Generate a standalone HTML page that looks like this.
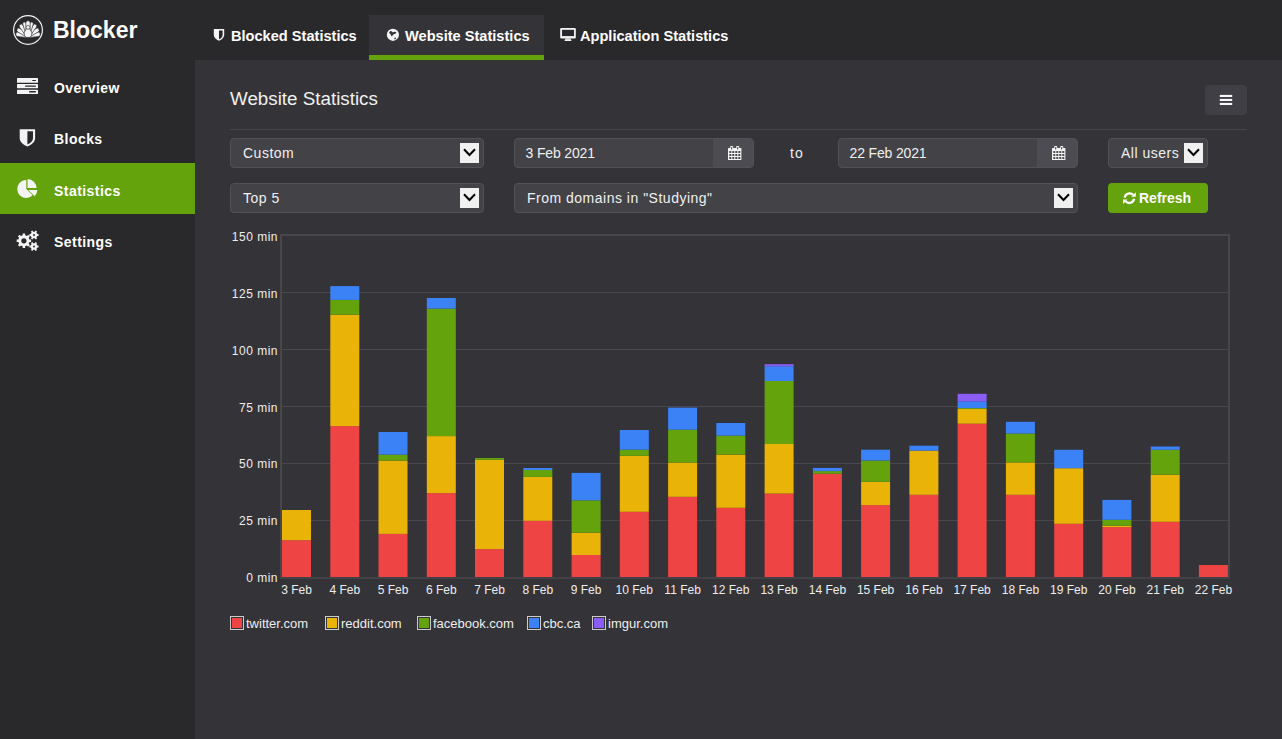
<!DOCTYPE html>
<html><head><meta charset="utf-8"><title>Blocker</title>
<style>
*{box-sizing:border-box;margin:0;padding:0}
html,body{width:1282px;height:739px;overflow:hidden;background:#343338;font-family:"Liberation Sans",sans-serif;color:#f2f2f2}
.abs{position:absolute}
#top{position:absolute;left:0;top:0;width:1282px;height:60px;background:#29282b}
#side{position:absolute;left:0;top:0;width:195px;height:739px;background:#29282b}
#content{position:absolute;left:195px;top:60px;width:1087px;height:679px;background:#343338}
.logo-text{position:absolute;left:53px;top:15px;font-size:23px;font-weight:bold;line-height:30px;color:#fff}
.nav{position:absolute;left:0;width:195px;height:51px}
.nav.active{background:#65a30d}
.nav .t{position:absolute;left:54px;top:2.5px;line-height:51px;font-size:14px;font-weight:bold;color:#fff;letter-spacing:0.45px}
.nav svg{position:absolute}
.tab{position:absolute;top:15px;height:45px}
.tab.active{background:#343338}
.tab.active:after{content:"";position:absolute;left:0;right:0;bottom:0;height:5px;background:#65a30d}
.tab .t{position:absolute;top:1px;line-height:40px;font-size:14.6px;font-weight:bold;color:#fff;white-space:nowrap}
.tab svg{position:absolute}
.title{position:absolute;left:230px;top:87px;font-size:18.8px;line-height:24px;color:#f0f0f0}
.hr{position:absolute;left:230px;top:129px;width:1017px;height:1px;background:#45444a}
.menu-btn{position:absolute;left:1205px;top:85px;width:42px;height:30px;background:#403f45;border-radius:4px}
.ctl{position:absolute;height:30px;background:#434247;border:1px solid #525157;border-radius:4px;font-size:14px;line-height:28px;color:#f0f0f0;white-space:nowrap}
.ctl .t{position:absolute;left:12px;top:0;letter-spacing:0.5px}
.ctl .t.d{left:10.5px;letter-spacing:-0.15px}
.dd{position:absolute;width:19px;height:20px;background:#f0f0f0;top:4px}
.dd svg{position:absolute;left:3px;top:5px}
.addon{position:absolute;top:0;right:0;width:40px;height:28px;background:#4d4c53;border-radius:0 3px 3px 0}
.addon svg{position:absolute;left:15px;top:7px}
.refresh{position:absolute;left:1108px;top:183px;width:100px;height:30px;background:#65a30d;border-radius:4px;color:#fff;font-weight:bold;font-size:14px;line-height:30px}
.ylab{position:absolute;right:1004px;font-size:12px;line-height:14px;color:#eee;text-align:right;white-space:nowrap;letter-spacing:0.5px}
.xlab{position:absolute;top:582px;width:60px;margin-left:-30px;text-align:center;font-size:12px;line-height:16px;color:#eee;white-space:nowrap}
.leg{position:absolute;top:616px;height:14px;font-size:13px;line-height:14px;color:#eee;white-space:nowrap}
.leg .sw{position:absolute;left:0;top:0;width:14px;height:14px;border:1px solid #ccc;padding:1px}
.leg .sw div{width:10px;height:10px}
.leg .t{position:absolute;left:16px;top:1px}
</style></head><body>
<div id="top"></div>
<div id="side"></div>
<div id="content"></div>

<!-- logo -->
<svg class="abs" style="left:12px;top:14px" width="32" height="32" viewBox="0 0 32 32">
<circle cx="16" cy="16" r="14.4" fill="none" stroke="#f4f4f4" stroke-width="1.2"/>
<g fill="#f4f4f4" stroke="#29282b" stroke-width="0.6">
<rect x="13.80" y="9.10" width="4.4" height="12.40" rx="2.20" transform="rotate(-83 16 21.5)"/>
<rect x="13.80" y="9.10" width="4.4" height="12.40" rx="2.20" transform="rotate(83 16 21.5)"/>
<rect x="13.95" y="8.90" width="4.1" height="12.60" rx="2.05" transform="rotate(-60 16 21.5)"/>
<rect x="13.95" y="8.90" width="4.1" height="12.60" rx="2.05" transform="rotate(60 16 21.5)"/>
<rect x="14.10" y="7.90" width="3.8" height="13.60" rx="1.90" transform="rotate(-36 16 21.5)"/>
<rect x="14.10" y="7.90" width="3.8" height="13.60" rx="1.90" transform="rotate(36 16 21.5)"/>
<rect x="14.30" y="7.50" width="3.4" height="14.00" rx="1.70" transform="rotate(-17 16 21.5)"/>
<rect x="14.30" y="7.50" width="3.4" height="14.00" rx="1.70" transform="rotate(17 16 21.5)"/>
<rect x="13.80" y="6.70" width="4.4" height="14.80" rx="2.20" transform="rotate(0 16 21.5)"/>
<path d="M16 14.6C18 14.6 18.6 16 18.6 16.8C19.6 17.6 19.8 18.8 19.8 19.8C19.8 22.2 18.2 23.6 16 23.6C13.8 23.6 12.2 22.2 12.2 19.8C12.2 18.8 12.4 17.6 13.4 16.8C13.4 16 14 14.6 16 14.6Z"/>
<circle cx="16" cy="13.3" r="1.9"/>
</g>
</svg>
<div class="logo-text">Blocker</div>

<!-- nav -->
<div class="nav" style="top:60px"><div class="t">Overview</div></div>
<div class="nav" style="top:111px"><div class="t">Blocks</div></div>
<div class="nav active" style="top:163px"><div class="t">Statistics</div></div>
<div class="nav" style="top:214.5px"><div class="t">Settings</div></div>

<svg class="abs" style="left:0;top:60px" width="195" height="200" viewBox="0 60 195 200">
 <g fill="#f4f4f4"><rect x="17" y="78" width="21" height="4.8" rx=".5"/><rect x="17" y="83.9" width="21" height="4.3" rx=".5"/><rect x="17" y="89.7" width="21" height="4.3" rx=".5"/></g>
 <g fill="#29282b"><rect x="32.2" y="79.9" width="3.8" height="1.2" rx=".5"/><rect x="25" y="85.4" width="11" height="1.4" rx=".6"/><rect x="29" y="91" width="7" height="1.4" rx=".6"/></g>
 <path d="M19.7 129.2h15.4v8.8c0 3.8-3.3 6.8-7.7 8.6-4.4-1.8-7.7-4.8-7.7-8.6z" fill="#f4f4f4"/>
 <path d="M27.4 131.2h5.6v6.8c0 2.8-2.1 5-5.6 6.5z" fill="#28272b"/>
 <g fill="#f4f4f4">
  <path d="M26.3 189V180A9 9 0 1 0 32.66 195.36Z"/>
  <path d="M27.5 188.1V179.1A9 9 0 0 1 36.5 188.1Z"/>
  <path d="M28.3 189.9H37.3A9 9 0 0 1 34.66 196.26Z"/>
 </g>
 <g fill="#f4f4f4" fill-rule="evenodd">
  <path d="M22.68 235.23L22.64 233.61L25.16 233.61L25.12 235.23L26.97 236.00L28.10 234.83L29.87 236.60L28.70 237.73L29.47 239.58L31.09 239.54L31.09 242.06L29.47 242.02L28.70 243.87L29.87 245.00L28.10 246.77L26.97 245.60L25.12 246.37L25.16 247.99L22.64 247.99L22.68 246.37L20.83 245.60L19.70 246.77L17.93 245.00L19.10 243.87L18.33 242.02L16.71 242.06L16.71 239.54L18.33 239.58L19.10 237.73L17.93 236.60L19.70 234.83L20.83 236.00ZM26.50 240.80A2.6 2.6 0 1 0 21.30 240.80A2.6 2.6 0 1 0 26.50 240.80Z"/>
  <path d="M34.88 231.72L35.45 230.53L37.14 231.51L36.40 232.60L37.28 234.12L38.60 234.02L38.60 235.98L37.28 235.88L36.40 237.40L37.14 238.49L35.45 239.47L34.88 238.28L33.12 238.28L32.55 239.47L30.86 238.49L31.60 237.40L30.72 235.88L29.40 235.98L29.40 234.02L30.72 234.12L31.60 232.60L30.86 231.51L32.55 230.53L33.12 231.72ZM35.00 235.00A1.0 1.0 0 1 0 33.00 235.00A1.0 1.0 0 1 0 35.00 235.00Z"/>
  <path d="M34.88 243.22L35.45 242.03L37.14 243.01L36.40 244.10L37.28 245.62L38.60 245.52L38.60 247.48L37.28 247.38L36.40 248.90L37.14 249.99L35.45 250.97L34.88 249.78L33.12 249.78L32.55 250.97L30.86 249.99L31.60 248.90L30.72 247.38L29.40 247.48L29.40 245.52L30.72 245.62L31.60 244.10L30.86 243.01L32.55 242.03L33.12 243.22ZM35.00 246.50A1.0 1.0 0 1 0 33.00 246.50A1.0 1.0 0 1 0 35.00 246.50Z"/>
 </g>
</svg>

<!-- tabs -->
<div class="tab" style="left:196px;width:173px"><div class="t" style="left:35px">Blocked Statistics</div></div>
<div class="tab active" style="left:369px;width:175px"><div class="t" style="left:36px">Website Statistics</div></div>
<div class="tab" style="left:544px;width:200px"><div class="t" style="left:36px">Application Statistics</div></div>
<svg class="abs" style="left:195px;top:15px" width="400" height="40" viewBox="195 15 400 40">
 <path d="M213.8 29h10.4v5.9c0 2.5-2.2 4.5-5.2 5.9-3-1.4-5.2-3.4-5.2-5.9z" fill="#f4f4f4"/>
 <path d="M219 30.6h3.6v4.3c0 1.8-1.4 3.2-3.6 4.3z" fill="#28272b"/>
 <circle cx="392.9" cy="34.8" r="6.1" fill="#f4f4f4"/>
 <path d="M389.1 32.2L390.6 31.1L392.2 31.4L392.9 32.6L394.3 31.8L396.3 31.9L395.7 33.5L393.9 34.2L392.7 35.1L392.1 36.6L391.1 35.7L390.5 34.1L389.6 33.4Z" fill="#343338"/>
 <circle cx="393.1" cy="31.2" r="0.9" fill="#f4f4f4"/>
 <path d="M394.4 38.1L395.4 37.5L396.1 38.1L395.4 39.2L394.5 39.4Z" fill="#343338"/>
 <rect x="560.2" y="28" width="15.6" height="10.6" rx="1.3" fill="#f4f4f4"/>
 <rect x="562" y="29.8" width="12" height="6.3" fill="#28272b"/>
 <path d="M565.4 38.5h5.2l.3 1.3h-5.8z" fill="#f4f4f4"/>
 <rect x="564.6" y="39.6" width="6.8" height="1.3" rx=".4" fill="#f4f4f4"/>
</svg>
<div class="title">Website Statistics</div>
<div class="menu-btn">
 <svg style="position:absolute;left:14px;top:9px" width="14" height="12" viewBox="0 0 14 12">
  <g fill="#f8f8f8"><rect x="0.8" y="0.9" width="12.4" height="2.1"/><rect x="0.8" y="4.9" width="12.4" height="2.1"/><rect x="0.8" y="8.9" width="12.4" height="2.1"/></g>
 </svg>
</div>
<div class="hr"></div>

<div class="ctl" style="left:230px;top:138px;width:254px">
 <div class="t">Custom</div>
 <div class="dd" style="left:229px"><svg width="13" height="9" viewBox="0 0 13 9"><path d="M1 1.2l5.5 5.8 5.5-5.8" fill="none" stroke="#000" stroke-width="2"/></svg></div>
</div>
<div class="ctl" style="left:230px;top:183px;width:254px">
 <div class="t">Top 5</div>
 <div class="dd" style="left:229px"><svg width="13" height="9" viewBox="0 0 13 9"><path d="M1 1.2l5.5 5.8 5.5-5.8" fill="none" stroke="#000" stroke-width="2"/></svg></div>
</div>

<div class="ctl" style="left:514px;top:138px;width:240px">
 <div class="t d">3 Feb 2021</div>
 <div class="addon"><svg width="14" height="14" viewBox="0 0 14 14">
  <rect x="0" y="1.9" width="13.4" height="12.1" rx=".5" fill="#f4f4f4"/>
  <rect x="2.2" y="0" width="3" height="3" rx=".8" fill="#f4f4f4"/><rect x="8.2" y="0" width="3" height="3" rx=".8" fill="#f4f4f4"/>
  <g fill="#3a393f"><rect x="3.2" y="1" width="1" height="2.4" rx=".5"/><rect x="9.2" y="1" width="1" height="2.4" rx=".5"/>
  <rect x="1.3" y="5.1" width="2" height="1.8"/><rect x="4.3" y="5.1" width="2" height="1.8"/><rect x="7.3" y="5.1" width="2" height="1.8"/><rect x="10.3" y="5.1" width="2" height="1.8"/>
  <rect x="1.3" y="8.1" width="2" height="1.8"/><rect x="4.3" y="8.1" width="2" height="1.8"/><rect x="7.3" y="8.1" width="2" height="1.8"/><rect x="10.3" y="8.1" width="2" height="1.8"/>
  <rect x="1.3" y="11.1" width="2" height="1.8"/><rect x="4.3" y="11.1" width="2" height="1.8"/><rect x="7.3" y="11.1" width="2" height="1.8"/><rect x="10.3" y="11.1" width="2" height="1.8"/></g>
 </svg></div>
</div>
<div class="abs" style="left:790px;top:144px;font-size:14px;line-height:18px;color:#eee;letter-spacing:1px">to</div>
<div class="ctl" style="left:838px;top:138px;width:240px">
 <div class="t d">22 Feb 2021</div>
 <div class="addon"><svg width="14" height="14" viewBox="0 0 14 14">
  <rect x="0" y="1.9" width="13.4" height="12.1" rx=".5" fill="#f4f4f4"/>
  <rect x="2.2" y="0" width="3" height="3" rx=".8" fill="#f4f4f4"/><rect x="8.2" y="0" width="3" height="3" rx=".8" fill="#f4f4f4"/>
  <g fill="#3a393f"><rect x="3.2" y="1" width="1" height="2.4" rx=".5"/><rect x="9.2" y="1" width="1" height="2.4" rx=".5"/>
  <rect x="1.3" y="5.1" width="2" height="1.8"/><rect x="4.3" y="5.1" width="2" height="1.8"/><rect x="7.3" y="5.1" width="2" height="1.8"/><rect x="10.3" y="5.1" width="2" height="1.8"/>
  <rect x="1.3" y="8.1" width="2" height="1.8"/><rect x="4.3" y="8.1" width="2" height="1.8"/><rect x="7.3" y="8.1" width="2" height="1.8"/><rect x="10.3" y="8.1" width="2" height="1.8"/>
  <rect x="1.3" y="11.1" width="2" height="1.8"/><rect x="4.3" y="11.1" width="2" height="1.8"/><rect x="7.3" y="11.1" width="2" height="1.8"/><rect x="10.3" y="11.1" width="2" height="1.8"/></g>
 </svg></div>
</div>
<div class="ctl" style="left:1108px;top:138px;width:100px">
 <div class="t">All users</div>
 <div class="dd" style="left:75px"><svg width="13" height="9" viewBox="0 0 13 9"><path d="M1 1.2l5.5 5.8 5.5-5.8" fill="none" stroke="#000" stroke-width="2"/></svg></div>
</div>
<div class="ctl" style="left:514px;top:183px;width:564px">
 <div class="t">From domains in "Studying"</div>
 <div class="dd" style="left:539px"><svg width="13" height="9" viewBox="0 0 13 9"><path d="M1 1.2l5.5 5.8 5.5-5.8" fill="none" stroke="#000" stroke-width="2"/></svg></div>
</div>
<div class="refresh">
 <svg style="position:absolute;left:15px;top:9px" width="14" height="14" viewBox="0 0 14 14">
  <path d="M1.7 5.6A4.9 4.9 0 0 1 10.2 3.1" fill="none" stroke="#fff" stroke-width="2.3"/>
  <path d="M12.8 0.3V4.8H8.3z" fill="#fff"/>
  <path d="M11.1 6.8A4.9 4.9 0 0 1 2.6 9.3" fill="none" stroke="#fff" stroke-width="2.3"/>
  <path d="M0 7.4H4.5L0 11.9z" fill="#fff"/>
 </svg>
 <div class="abs" style="left:31px;top:0">Refresh</div>
</div>
<svg class="abs" style="left:0;top:0" width="1282" height="739" viewBox="0 0 1282 739">
<line x1="281" y1="292.5" x2="1229" y2="292.5" stroke="#48474d" stroke-width="1"/>
<line x1="281" y1="349.5" x2="1229" y2="349.5" stroke="#48474d" stroke-width="1"/>
<line x1="281" y1="406.5" x2="1229" y2="406.5" stroke="#48474d" stroke-width="1"/>
<line x1="281" y1="463.5" x2="1229" y2="463.5" stroke="#48474d" stroke-width="1"/>
<line x1="281" y1="520.5" x2="1229" y2="520.5" stroke="#48474d" stroke-width="1"/>
<rect x="282.0" y="540.2" width="29" height="36.8" fill="#ef4444"/>
<rect x="282.0" y="510.0" width="29" height="30.2" fill="#eab308"/>
<rect x="330.3" y="426.1" width="29" height="150.9" fill="#ef4444"/>
<rect x="330.3" y="314.7" width="29" height="111.4" fill="#eab308"/>
<rect x="330.3" y="299.9" width="29" height="14.8" fill="#65a30d"/>
<rect x="330.3" y="286.1" width="29" height="13.8" fill="#3b82f6"/>
<rect x="378.5" y="533.9" width="29" height="43.1" fill="#ef4444"/>
<rect x="378.5" y="460.6" width="29" height="73.3" fill="#eab308"/>
<rect x="378.5" y="454.6" width="29" height="6.0" fill="#65a30d"/>
<rect x="378.5" y="432.0" width="29" height="22.6" fill="#3b82f6"/>
<rect x="426.8" y="493.1" width="29" height="83.9" fill="#ef4444"/>
<rect x="426.8" y="436.1" width="29" height="57.0" fill="#eab308"/>
<rect x="426.8" y="308.6" width="29" height="127.5" fill="#65a30d"/>
<rect x="426.8" y="298.0" width="29" height="10.6" fill="#3b82f6"/>
<rect x="475.0" y="549.1" width="29" height="27.9" fill="#ef4444"/>
<rect x="475.0" y="459.8" width="29" height="89.3" fill="#eab308"/>
<rect x="475.0" y="458.0" width="29" height="1.8" fill="#65a30d"/>
<rect x="523.3" y="520.8" width="29" height="56.2" fill="#ef4444"/>
<rect x="523.3" y="476.9" width="29" height="43.9" fill="#eab308"/>
<rect x="523.3" y="470.0" width="29" height="6.9" fill="#65a30d"/>
<rect x="523.3" y="468.0" width="29" height="2.0" fill="#3b82f6"/>
<rect x="571.6" y="555.0" width="29" height="22.0" fill="#ef4444"/>
<rect x="571.6" y="532.7" width="29" height="22.3" fill="#eab308"/>
<rect x="571.6" y="500.3" width="29" height="32.4" fill="#65a30d"/>
<rect x="571.6" y="472.9" width="29" height="27.4" fill="#3b82f6"/>
<rect x="619.8" y="511.8" width="29" height="65.2" fill="#ef4444"/>
<rect x="619.8" y="455.8" width="29" height="56.0" fill="#eab308"/>
<rect x="619.8" y="449.7" width="29" height="6.1" fill="#65a30d"/>
<rect x="619.8" y="430.0" width="29" height="19.7" fill="#3b82f6"/>
<rect x="668.1" y="496.8" width="29" height="80.2" fill="#ef4444"/>
<rect x="668.1" y="462.5" width="29" height="34.3" fill="#eab308"/>
<rect x="668.1" y="429.7" width="29" height="32.8" fill="#65a30d"/>
<rect x="668.1" y="407.6" width="29" height="22.1" fill="#3b82f6"/>
<rect x="716.3" y="507.8" width="29" height="69.2" fill="#ef4444"/>
<rect x="716.3" y="454.6" width="29" height="53.2" fill="#eab308"/>
<rect x="716.3" y="435.6" width="29" height="19.0" fill="#65a30d"/>
<rect x="716.3" y="423.0" width="29" height="12.6" fill="#3b82f6"/>
<rect x="764.6" y="493.6" width="29" height="83.4" fill="#ef4444"/>
<rect x="764.6" y="444.0" width="29" height="49.6" fill="#eab308"/>
<rect x="764.6" y="381.0" width="29" height="63.0" fill="#65a30d"/>
<rect x="764.6" y="366.2" width="29" height="14.8" fill="#3b82f6"/>
<rect x="764.6" y="364.2" width="29" height="2.0" fill="#8b5cf6"/>
<rect x="812.9" y="473.7" width="29" height="103.3" fill="#ef4444"/>
<rect x="812.9" y="471.1" width="29" height="2.6" fill="#65a30d"/>
<rect x="812.9" y="467.9" width="29" height="3.2" fill="#3b82f6"/>
<rect x="861.1" y="505.1" width="29" height="71.9" fill="#ef4444"/>
<rect x="861.1" y="481.8" width="29" height="23.3" fill="#eab308"/>
<rect x="861.1" y="460.5" width="29" height="21.3" fill="#65a30d"/>
<rect x="861.1" y="449.7" width="29" height="10.8" fill="#3b82f6"/>
<rect x="909.4" y="494.8" width="29" height="82.2" fill="#ef4444"/>
<rect x="909.4" y="450.6" width="29" height="44.2" fill="#eab308"/>
<rect x="909.4" y="445.7" width="29" height="4.9" fill="#3b82f6"/>
<rect x="957.6" y="423.7" width="29" height="153.3" fill="#ef4444"/>
<rect x="957.6" y="409.0" width="29" height="14.7" fill="#eab308"/>
<rect x="957.6" y="408.1" width="29" height="0.9" fill="#65a30d"/>
<rect x="957.6" y="401.3" width="29" height="6.8" fill="#3b82f6"/>
<rect x="957.6" y="393.8" width="29" height="7.5" fill="#8b5cf6"/>
<rect x="1005.9" y="494.8" width="29" height="82.2" fill="#ef4444"/>
<rect x="1005.9" y="462.4" width="29" height="32.4" fill="#eab308"/>
<rect x="1005.9" y="433.5" width="29" height="28.9" fill="#65a30d"/>
<rect x="1005.9" y="421.8" width="29" height="11.7" fill="#3b82f6"/>
<rect x="1054.2" y="523.8" width="29" height="53.2" fill="#ef4444"/>
<rect x="1054.2" y="468.2" width="29" height="55.6" fill="#eab308"/>
<rect x="1054.2" y="449.8" width="29" height="18.4" fill="#3b82f6"/>
<rect x="1102.4" y="527.1" width="29" height="49.9" fill="#ef4444"/>
<rect x="1102.4" y="525.7" width="29" height="1.4" fill="#eab308"/>
<rect x="1102.4" y="519.8" width="29" height="5.9" fill="#65a30d"/>
<rect x="1102.4" y="499.9" width="29" height="19.9" fill="#3b82f6"/>
<rect x="1150.7" y="521.8" width="29" height="55.2" fill="#ef4444"/>
<rect x="1150.7" y="474.7" width="29" height="47.1" fill="#eab308"/>
<rect x="1150.7" y="449.8" width="29" height="24.9" fill="#65a30d"/>
<rect x="1150.7" y="446.5" width="29" height="3.3" fill="#3b82f6"/>
<rect x="1198.9" y="565.0" width="29" height="12.0" fill="#ef4444"/>

<g fill="#47464c"><rect x="280" y="234" width="950" height="2"/><rect x="280" y="234" width="2" height="345"/><rect x="1228" y="234" width="2" height="345"/><rect x="280" y="577.3" width="950" height="1.5"/></g>
</svg>
<div class="ylab" style="top:230.00px">150 min</div>
<div class="ylab" style="top:286.85px">125 min</div>
<div class="ylab" style="top:343.70px">100 min</div>
<div class="ylab" style="top:400.55px">75 min</div>
<div class="ylab" style="top:457.40px">50 min</div>
<div class="ylab" style="top:514.25px">25 min</div>
<div class="ylab" style="top:571.10px">0 min</div>
<div class="xlab" style="left:296.5px">3 Feb</div>
<div class="xlab" style="left:344.8px">4 Feb</div>
<div class="xlab" style="left:393.0px">5 Feb</div>
<div class="xlab" style="left:441.3px">6 Feb</div>
<div class="xlab" style="left:489.5px">7 Feb</div>
<div class="xlab" style="left:537.8px">8 Feb</div>
<div class="xlab" style="left:586.1px">9 Feb</div>
<div class="xlab" style="left:634.3px">10 Feb</div>
<div class="xlab" style="left:682.6px">11 Feb</div>
<div class="xlab" style="left:730.8px">12 Feb</div>
<div class="xlab" style="left:779.1px">13 Feb</div>
<div class="xlab" style="left:827.4px">14 Feb</div>
<div class="xlab" style="left:875.6px">15 Feb</div>
<div class="xlab" style="left:923.9px">16 Feb</div>
<div class="xlab" style="left:972.1px">17 Feb</div>
<div class="xlab" style="left:1020.4px">18 Feb</div>
<div class="xlab" style="left:1068.7px">19 Feb</div>
<div class="xlab" style="left:1116.9px">20 Feb</div>
<div class="xlab" style="left:1165.2px">21 Feb</div>
<div class="xlab" style="left:1213.4px">22 Feb</div>
<div class="leg" style="left:230px"><div class="sw"><div style="background:#ef4444"></div></div><div class="t">twitter.com</div></div>
<div class="leg" style="left:325px"><div class="sw"><div style="background:#eab308"></div></div><div class="t">reddit.com</div></div>
<div class="leg" style="left:417px"><div class="sw"><div style="background:#65a30d"></div></div><div class="t">facebook.com</div></div>
<div class="leg" style="left:527px"><div class="sw"><div style="background:#3b82f6"></div></div><div class="t">cbc.ca</div></div>
<div class="leg" style="left:592px"><div class="sw"><div style="background:#8b5cf6"></div></div><div class="t">imgur.com</div></div>
</body></html>
